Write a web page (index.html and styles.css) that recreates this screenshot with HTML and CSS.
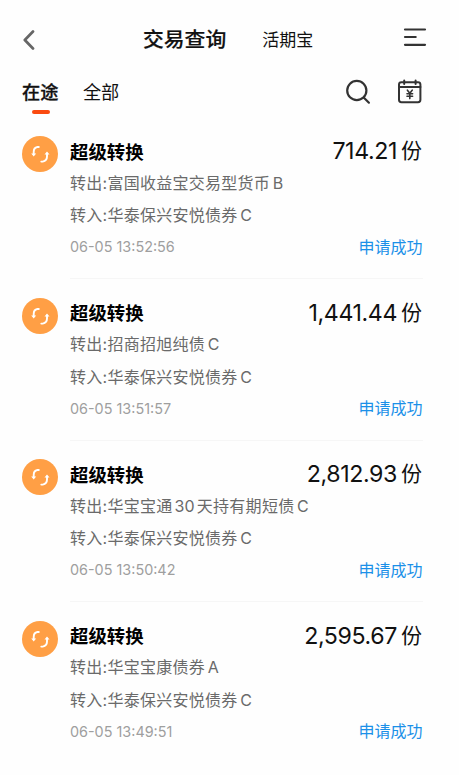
FILE: index.html
```html
<!DOCTYPE html>
<html lang="zh-CN">
<head>
<meta charset="utf-8">
<title>交易查询</title>
<link rel="stylesheet" href="styles.css">
</head>
<body>
<svg class="defs" width="0" height="0" aria-hidden="true">
  <symbol id="convert" viewBox="0 0 36 36">
    <circle cx="18" cy="18" r="18" fill="#ff9f45"/>
    <g fill="none" stroke="#fff" stroke-width="1.9" stroke-linecap="round" stroke-linejoin="round">
      <path d="M16.8 11h-1.4q-3.7.6-3.7 5v2"/>
      <path d="M19.3 25.6h1.5q4.2-.6 4.2-5v-2.8"/>
    </g>
    <path d="M9.2 17.6h5l-2.5 3zM22.5 18.6h5L25 15.4z" fill="#fff"/>
  </symbol>
</svg>
<header class="bar">
  <svg class="back" width="12" height="20" viewBox="0 0 12 20"><path d="M10 1.5 1.8 10 10 18.5" fill="none" stroke="#666" stroke-width="2.7" stroke-linecap="round" stroke-linejoin="round"/></svg>
  <h1 class="title">交易查询</h1>
  <span class="product">活期宝</span>
  <svg class="menu" width="24" height="20" viewBox="0 0 24 20"><path d="M2 2.5h20M2 10h10.7M2 17.8h20" fill="none" stroke="#333" stroke-width="2.2" stroke-linecap="round"/></svg>
</header>
<nav class="tabs">
  <span class="tab active">在途</span>
  <span class="tab">全部</span>
  <svg class="search" width="26" height="26" viewBox="0 0 26 26"><g fill="none" stroke="#333" stroke-width="2.2" stroke-linecap="round"><circle cx="11.8" cy="11.5" r="9.6"/><path d="m18.9 18.7 5 5"/></g></svg>
  <svg class="calendar" width="26" height="26" viewBox="0 0 26 26"><g fill="none" stroke="#333" stroke-width="2" stroke-linecap="round" stroke-linejoin="round"><rect x="2" y="3.2" width="21.4" height="20" rx="2.4"/><path d="M2 8h21.4M7.2 1.5v3.4M18.6 1.5v3.4"/><path stroke-width="1.6" d="m10.4 11.2 2.4 3 2.4-3M12.8 14.2v5.4M10 14.8h5.6M10 17.2h5.6"/></g></svg>
</nav>
<main class="list">
  <article class="item">
    <svg class="icon"><use href="#convert"/></svg>
    <div class="body">
      <div class="row head"><h2 class="name">超级转换</h2><div class="amount"><span class="num">714.21</span>份</div></div>
      <p class="line">转出:富国收益宝交易型货币<span class="cls">B</span></p>
      <p class="line">转入:华泰保兴安悦债券<span class="cls">C</span></p>
      <div class="row foot"><time class="time">06-05 13:52:56</time><span class="status">申请成功</span></div>
    </div>
  </article>
  <article class="item">
    <svg class="icon"><use href="#convert"/></svg>
    <div class="body">
      <div class="row head"><h2 class="name">超级转换</h2><div class="amount"><span class="num">1,441.44</span>份</div></div>
      <p class="line">转出:招商招旭纯债<span class="cls">C</span></p>
      <p class="line">转入:华泰保兴安悦债券<span class="cls">C</span></p>
      <div class="row foot"><time class="time">06-05 13:51:57</time><span class="status">申请成功</span></div>
    </div>
  </article>
  <article class="item">
    <svg class="icon"><use href="#convert"/></svg>
    <div class="body">
      <div class="row head"><h2 class="name">超级转换</h2><div class="amount"><span class="num">2,812.93</span>份</div></div>
      <p class="line">转出:华宝宝通<span class="days">30</span>天持有期短债<span class="cls">C</span></p>
      <p class="line">转入:华泰保兴安悦债券<span class="cls">C</span></p>
      <div class="row foot"><time class="time">06-05 13:50:42</time><span class="status">申请成功</span></div>
    </div>
  </article>
  <article class="item">
    <svg class="icon"><use href="#convert"/></svg>
    <div class="body">
      <div class="row head"><h2 class="name">超级转换</h2><div class="amount"><span class="num">2,595.67</span>份</div></div>
      <p class="line">转出:华宝宝康债券<span class="cls">A</span></p>
      <p class="line">转入:华泰保兴安悦债券<span class="cls">C</span></p>
      <div class="row foot"><time class="time">06-05 13:49:51</time><span class="status">申请成功</span></div>
    </div>
  </article>
</main>
</body>
</html>
```
FILE: styles.css
```css
* { box-sizing: border-box; margin: 0; padding: 0; }
body {
  width: 459px;
  height: 775px;
  overflow: hidden;
  background: #fefefe;
  color: #111;
  font-family: Inter, "Noto Sans CJK SC", sans-serif;
}
svg { display: block; flex: none; }
.defs { position: absolute; }
.bar {
  display: flex;
  align-items: center;
  height: 72px;
  padding: 8px 32px 0 22.5px;
}
.back { margin-bottom: 1px; }
.title {
  margin-left: 108.5px;
  font-size: 20.8px;
  font-weight: 500;
  line-height: 30px;
  -webkit-text-stroke: .2px #111;
}
.product { margin-left: 36px; font-size: 17px; line-height: 26px; }
.menu { margin: 0 0 6px auto; }
.tabs {
  display: flex;
  align-items: center;
  height: 45.5px;
  padding: 0 36px 6px 22px;
}
.tab { margin-right: 24.5px; font-size: 18.2px; line-height: 40px; }
.active { position: relative; font-weight: 500; -webkit-text-stroke: .3px #111; }
.active::after {
  content: "";
  position: absolute;
  left: 10px;
  bottom: -2px;
  width: 17.5px;
  height: 4px;
  border-radius: 2px;
  background: #fa4a10;
}
.search { margin-left: auto; }
.calendar { margin-left: 26px; }
.item {
  display: flex;
  height: 161.5px;
  padding: 0 36px 0 21.5px;
}
.icon { width: 36px; height: 36px; margin-top: 18.5px; }
.body {
  flex: 1;
  margin-left: 12.5px;
  padding-top: 18px;
  border-bottom: 1.5px solid #f6f6f6;
}
.item:last-child .body { border-bottom: 0; }
.row { display: flex; justify-content: space-between; align-items: center; }
.head { height: 31px; }
.name { margin-top: 2px; font-size: 18.4px; font-weight: 700; line-height: 31px; color: #000; }
.amount {
  display: flex;
  align-items: center;
  gap: 4px;
  margin: 0 1px 0 0;
  font-size: 21px;
  line-height: 30px;
}
.num { font-size: 23.2px; letter-spacing: -.4px; }
.line {
  font-size: 16px;
  line-height: 32.5px;
  letter-spacing: .27px;
  color: #6a6a6a;
  white-space: nowrap;
}
.cls { margin-left: 2.6px; }
.days { margin: 0 1.9px; }
.foot { height: 30px; }
.time { font-size: 14.4px; color: #9f9f9f; }
.status { margin: -2px .5px 0 0; font-size: 16px; color: #1b90e8; }
```
